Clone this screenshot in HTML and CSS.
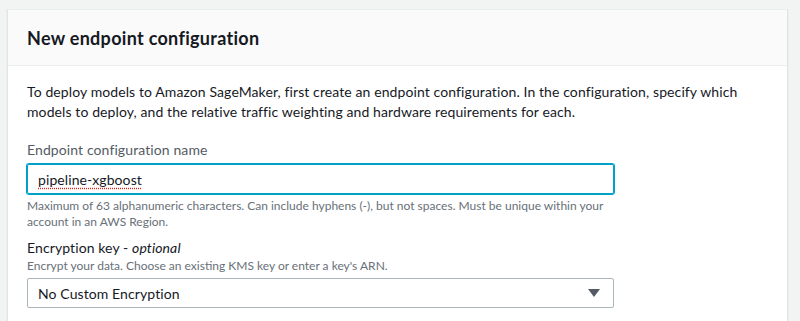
FILE: index.html
```html
<!DOCTYPE html>
<html lang="en">
<head>
  <meta charset="UTF-8" />
  <title>New endpoint configuration</title>
  <link rel="stylesheet" href="styles.css">
</head>
<body>
  <div class="card">
    <div class="card-header">
      <h2>New endpoint configuration</h2>
    </div>

    <div class="card-body">
      <p class="intro">To deploy models to Amazon SageMaker, first create an endpoint configuration. In the configuration, specify which models to deploy, and the relative traffic weighting and hardware requirements for each.</p>

      <div class="field">
        <label class="field-label muted">Endpoint configuration name</label>
        <div class="input focused"><span class="misspelled">pipeline-xgboost</span></div>
        <div class="hint">Maximum of 63 alphanumeric characters. Can include hyphens (-), but not spaces. Must be unique within your account in an AWS Region.</div>
      </div>

      <div class="field">
        <label class="field-label">Encryption key - <em>optional</em></label>
        <div class="hint desc">Encrypt your data. Choose an existing KMS key or enter a key's ARN.</div>
        <div class="input select">
          <span>No Custom Encryption</span>
          <span class="caret"></span>
        </div>
      </div>
    </div>
  </div>
</body>
</html>
```

FILE: styles.css
```css
* {
  box-sizing: border-box;
  margin: 0;
  padding: 0;
}

body {
  font-family: Lato, 'Noto Sans', sans-serif;
  background: #f2f3f3;
  color: #16191f;
  padding: 9px 12px 0 7px;
}

.card {
  background: #fff;
  border: 1px solid #e1e4e4;
  border-top-color: #eaeded;
  box-shadow: 0 1px 1px rgba(0, 28, 36, 0.15);
}

.card-header {
  background: #fafafa;
  border-bottom: 1px solid #eaeded;
  padding: 17px 19px 16px;
}

.card-header h2 {
  font-size: 18px;
  line-height: 22px;
  font-weight: 700;
  letter-spacing: 0.3px;
  color: #16191f;
}

.card-body {
  padding: 16px 19px 14px;
}

.intro {
  font-size: 14px;
  line-height: 20px;
  letter-spacing: 0.1px;
  max-width: 740px;
}

.field {
  width: 587px;
}

.field + .field {
  margin-top: 8px;
}

.intro + .field {
  margin-top: 18px;
}

.field-label {
  display: block;
  font-size: 14px;
  line-height: 20px;
  letter-spacing: 0.1px;
  color: #16191f;
}

.field-label.muted {
  color: #545b64;
  margin-bottom: 4px;
}

.field-label em {
  font-style: italic;
}

.input {
  height: 30px;
  border: 1px solid #aab7b8;
  border-radius: 2px;
  padding: 0 10px;
  font-size: 14px;
  letter-spacing: 0.1px;
  display: flex;
  align-items: center;
  justify-content: space-between;
  color: #16191f;
}

.input.focused {
  border-color: #00a1c9;
  box-shadow: 0 0 0 1px #00a1c9;
}

.misspelled {
  text-decoration: underline dotted #e0261b;
  text-underline-offset: 3px;
}

.hint {
  font-size: 12px;
  line-height: 16px;
  color: #687078;
  margin-top: 4px;
}

.hint.desc {
  margin: 0 0 4px;
}

.caret {
  width: 0;
  height: 0;
  border-left: 6px solid transparent;
  border-right: 6px solid transparent;
  border-top: 8px solid #545b64;
  margin-right: 3px;
}
```
